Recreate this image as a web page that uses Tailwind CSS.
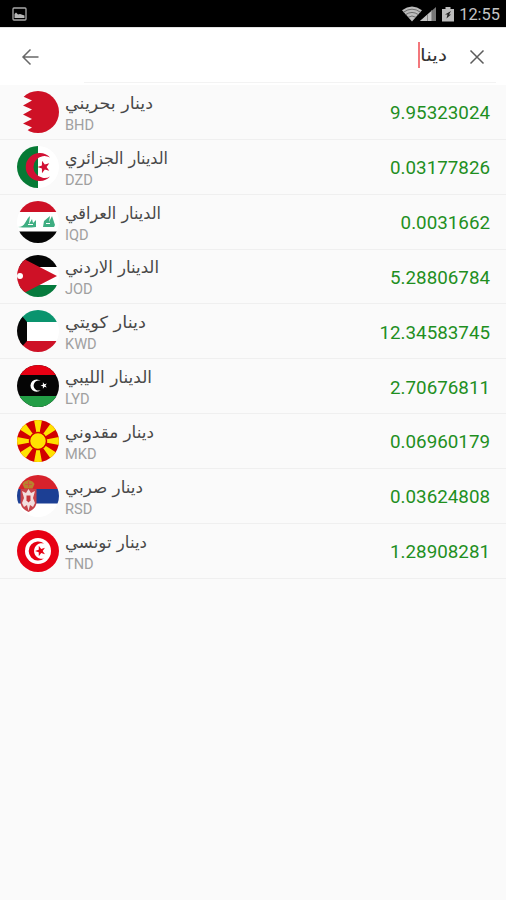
<!DOCTYPE html>
<html lang="ar">
<head>
    <meta charset="UTF-8">
    <meta name="viewport" content="width=device-width, initial-scale=1.0">
    <title>Currency Search</title>
    <script src="https://cdn.jsdelivr.net/npm/@tailwindcss/browser@4"></script>
</head>
<body class="bg-[#fafafa] h-[900px] overflow-hidden font-[Roboto,'DejaVu_Sans',sans-serif]">

    <!-- Status bar -->
    <div class="h-[27px] bg-black flex items-center justify-between pl-3 pr-[6px]">
        <svg class="w-[15px] h-[14px] mt-px" viewBox="0 0 15 14">
            <rect x="1" y="1" width="13" height="12" rx="1" fill="none" stroke="#a8a8a8" stroke-width="1.3"/>
            <path d="M2.500 11V7l1.500-1.500 2 2 2-.5 4.500 1.500V11z" fill="#b8b8b8"/>
        </svg>
        <div class="flex items-center">
            <svg class="w-5 h-4" viewBox="0 0 20 16">
                <path d="M0 4.2Q10-3 20 4.2L10 15.5z" fill="#bcbcbc"/>
                <path d="M1.5 6.2Q10 .2 18.5 6.2M3.5 8.7Q10 4.2 16.5 8.7M6 11.3Q10 8.7 14 11.3" fill="none" stroke="#555" stroke-width=".8"/>
            </svg>
            <svg class="w-[17px] h-4 -ml-0.5" viewBox="0 0 17 16">
                <path d="M0 15 16 1v14z" fill="#777"/>
                <path d="M0 15 12 4.500v10.500z" fill="#c4c4c4"/>
                <path d="M7.500 8v7M11.800 4v11" stroke="#777" stroke-width=".8"/>
            </svg>
            <svg class="w-3 h-4 ml-[5px]" viewBox="0 0 12 16">
                <path d="M0 3h3.500V1h5v2H12v12.500H0z" fill="#bcbcbc"/>
                <path d="M9 5 3 8.500h2.500l-1 4L9 8.500H7z" fill="#222"/>
            </svg>
            <span class="ml-[7px] w-[39px] flex justify-end text-[16.4px] leading-[27px] text-[#c4c4c4] whitespace-nowrap mt-px">12:55</span>
        </div>
    </div>

    <!-- Search bar -->
    <div class="h-[58px] bg-white border-t border-[#e2e2e2] flex flex-col">
        <div class="h-[54px] pt-1 flex items-center justify-between pl-[21px] pr-[21px]">
            <svg class="w-[18px] h-[18px]" viewBox="0 0 18 18" fill="none" stroke="#686868" stroke-width="1.5">
                <path d="M17.500 9H2M9.500 1.500 2 9l7.500 7.500"/>
            </svg>
            <div class="flex items-center">
                <span class="w-[2px] h-[26px] -mt-1 bg-[#f3777c]"></span>
                <svg class="w-[27px] h-[26px] overflow-visible">
                    <text x="0" y="17" textLength="27" lengthAdjust="spacingAndGlyphs" class="font-['DejaVu_Sans',sans-serif] text-[17.5px] fill-[#333]">دينا</text>
                </svg>
                <svg class="w-4 h-4 ml-[22px]" viewBox="0 0 16 16" fill="none" stroke="#5c5c5c" stroke-width="1.5">
                    <path d="m1.500 1.500 13 13m0-13-13 13"/>
                </svg>
            </div>
        </div>
        <div class="h-px ml-[84px] mr-2.5 bg-[#f3f3f3]"></div>
    </div>

    <!-- Results -->
    <ul id="results"></ul>

    <script>
        const star = (x, y, r, fill, turn = 0) => {
            const points = [];
            for (let i = 0; i < 10; i++) {
                const a = (turn + i * 36) * Math.PI / 180;
                const d = i % 2 ? r * 0.4 : r;
                points.push(`${(x + d * Math.cos(a)).toFixed(2)},${(y + d * Math.sin(a)).toFixed(2)}`);
            }
            return `<polygon points="${points.join(' ')}" fill="${fill}"/>`;
        };

        const flags = {
            BHD: `<rect width="42" height="42" fill="#fafafa"/>
                <path d="M42 0H13L6 5.500 15 9.500 6 14.500 15 18.500 6 23.500 15 28 6 32.500 15 36.500 9 40 12 42h30z" fill="#ce1126"/>`,
            DZD: `<rect width="42" height="42" fill="#fff"/><rect width="21" height="42" fill="#067a35"/>
                <path d="M33 11.500A14 14 0 1 0 33 30.500 11 11 0 1 1 33 11.500z" fill="#d21034"/>
                ${star(27, 21, 6.5, '#d21034', 180)}`,
            IQD: `<rect width="42" height="42" fill="#fff"/><rect width="42" height="11" fill="#ce1126"/><rect y="30.500" width="42" height="12" fill="#050505"/>
                <path d="M1 26q5 0 7-4l3-5 2-2-1 8 3-5 1 4 3-3v7q-9 1-18 0zM26 26l1-6 6-5-1 6 3-6 3 9-1 2H26z" fill="#3fae82"/>
                <path d="M11 23.500h5M29 22.500h4" stroke="#fff" stroke-width="1"/>`,
            JOD: `<rect width="42" height="42" fill="#fff"/><rect width="42" height="12" fill="#050505"/><rect y="30" width="42" height="12" fill="#067a3d"/>
                <path d="M0 0 7 4 40 21 7 38 0 42z" fill="#ce1126"/><circle cx="3" cy="21" r="3" fill="#fff"/>`,
            KWD: `<rect width="42" height="42" fill="#fff"/><rect width="42" height="12" fill="#0a946e"/><rect y="31" width="42" height="11" fill="#ce1126"/>
                <path d="M0 0h0L10 12v19L0 42z" fill="#050505"/>`,
            LYD: `<rect width="42" height="42" fill="#050505"/><rect width="42" height="10" fill="#e70013"/><rect y="31" width="42" height="11" fill="#239e46"/>
                <path d="M24 16.200A6.200 6.200 0 1 0 24 25 5 5 0 1 1 24 16.200z" fill="#fff"/>${star(27, 20.5, 3.5, '#fff', 180)}`,
            MKD: `<rect width="42" height="42" fill="#d20000"/>
                <path d="M17 0h8l-4 21zM17 42h8l-4-21zM0 17v8l21-4zM42 17v8l-21-4zM2 9l6-6 13 18zM40 9l-6-6-13 18zM2 33l6 6 13-18zM40 33l-6 6-13-18z" fill="#ffe200"/>
                <circle cx="21" cy="21" r="8.500" fill="#ffe200" stroke="#d20000" stroke-width="1.500"/>`,
            RSD: `<rect width="42" height="42" fill="#fff"/><rect width="42" height="14" fill="#d7222c"/><rect y="14" width="42" height="14.500" fill="#1c3f94"/>
                <path d="M3.500 14h16v14q-1 6-8 9-7-3-8-9z" fill="#c8434a"/>
                <path d="m11.500 14 2.500 4 4-2-2 7 2 5-2 4-3-2-1.500 6-1.500-6-3 2-2-4 2-5-2-7 4 2z" fill="#f2dede"/>
                <path d="M9.500 20.500h4v5l-2 2-2-2z" fill="#c6363c"/>
                <path d="M5.500 9q1-3 6-4 5 1 6 4l-2 4.500h-8z" fill="#b8822e"/>
                <path d="M8 9.500h7M11.500 6v6" stroke="#d7503a" stroke-width="1"/>`,
            TND: `<rect width="42" height="42" fill="#e70013"/><circle cx="21" cy="21" r="13" fill="#fff"/>
                <path d="M27 13.500A9.500 9.500 0 1 0 27 28.500 7.800 7.800 0 1 1 27 13.500z" fill="#e70013"/>${star(23.5, 21, 5.5, '#e70013', 180)}`
        };

        // width: how wide the name is drawn, px
        const currencies = [
            { code: 'BHD', name: 'دينار بحريني', rate: '9.95323024', width: 88 },
            { code: 'DZD', name: 'الدينار الجزائري', rate: '0.03177826', width: 103 },
            { code: 'IQD', name: 'الدينار العراقي', rate: '0.0031662', width: 96 },
            { code: 'JOD', name: 'الدينار الاردني', rate: '5.28806784', width: 94 },
            { code: 'KWD', name: 'دينار كويتي', rate: '12.34583745', width: 81 },
            { code: 'LYD', name: 'الدينار الليبي', rate: '2.70676811', width: 87 },
            { code: 'MKD', name: 'دينار مقدوني', rate: '0.06960179', width: 89 },
            { code: 'RSD', name: 'دينار صربي', rate: '0.03624808', width: 78 },
            { code: 'TND', name: 'دينار تونسي', rate: '1.28908281', width: 82 }
        ];

        document.getElementById('results').innerHTML = currencies.map(c => `
            <li class="h-[54.85px] flex items-center pl-[17px] pr-4 border-b border-[#efefef]">
                <svg class="w-[42px] h-[42px] rounded-full shrink-0" viewBox="0 0 42 42">${flags[c.code]}</svg>
                <div class="ml-1.5 flex-1 pt-[3px]">
                    <svg class="h-[23px] overflow-visible" style="width: ${c.width}px">
                        <text x="0" y="15.500" textLength="${c.width}" lengthAdjust="spacingAndGlyphs" class="font-['DejaVu_Sans',sans-serif] text-[16.5px] fill-[#484848]">${c.name}</text>
                    </svg>
                    <div class="text-[14.6px] leading-[18px] text-[#a0a0a0]">${c.code}</div>
                </div>
                <span class="pt-[3px] text-[18.8px] text-[#1f8f1f]">${c.rate}</span>
            </li>`).join('');
    </script>
</body>
</html>
